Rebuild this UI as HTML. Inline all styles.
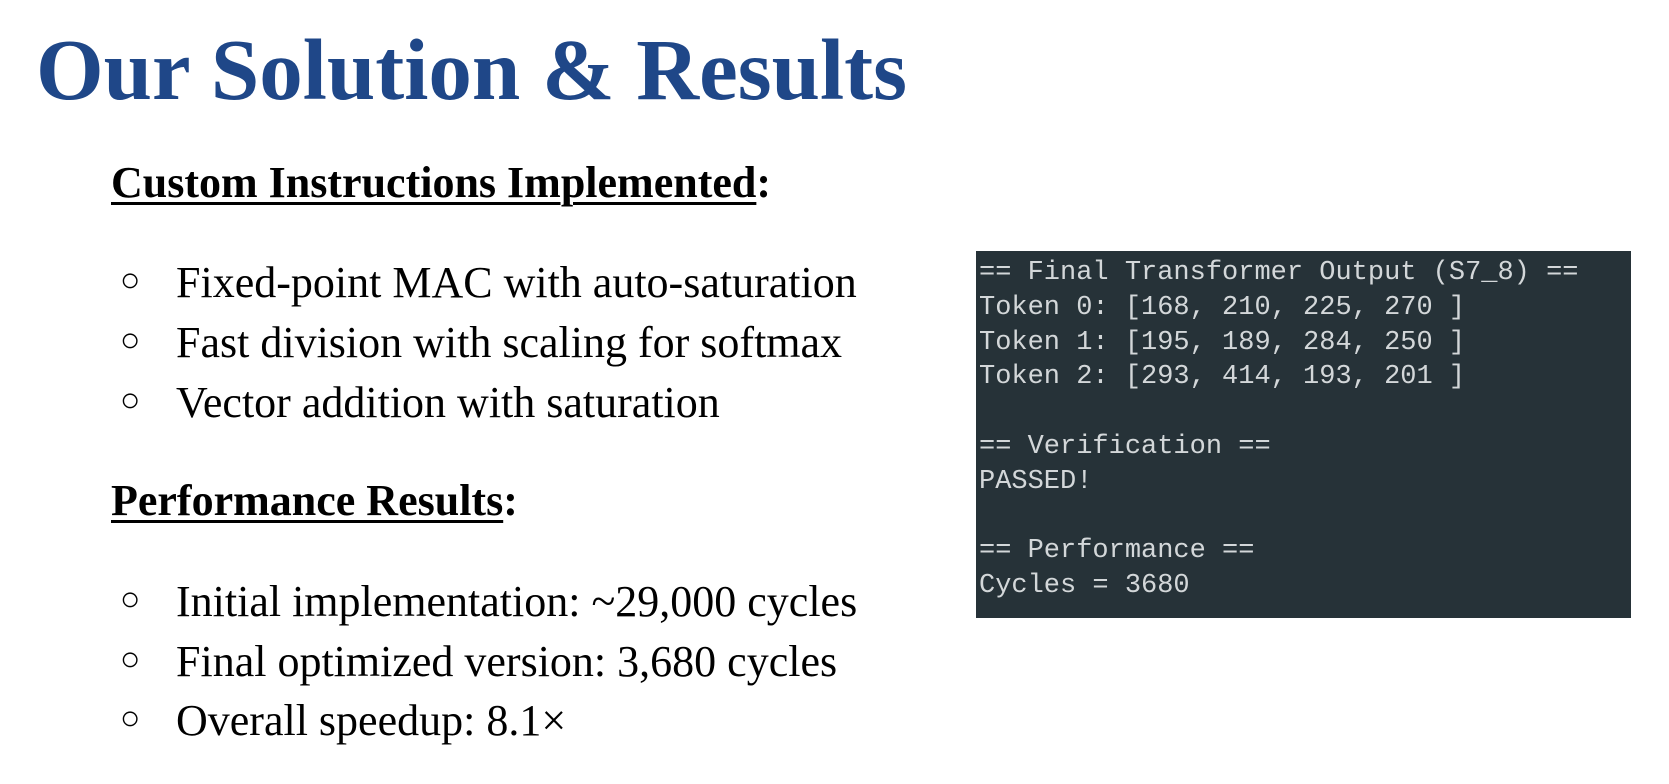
<!DOCTYPE html>
<html><head><style>
html,body{margin:0;padding:0;background:#fff;width:1669px;height:784px;overflow:hidden;position:relative}
.t{position:absolute;font-family:"Liberation Serif",serif;white-space:nowrap}
h1{position:absolute;left:36px;top:10px;margin:0;font:bold 87px "Liberation Serif",serif;color:#1f4788;white-space:nowrap;line-height:120px}
.h{font-weight:bold;font-size:44px;color:#000;left:111px}
.h span{text-decoration:underline;text-decoration-thickness:3px;text-underline-offset:5px}
.b{font-size:44px;color:#000;left:120px}
.b i{font-style:normal;position:absolute;left:0;font-size:34px;top:5px}
.b span{position:absolute;left:56px}
.term{position:absolute;left:976px;top:251px;width:655px;height:367px;background:#263238}
.term pre{margin:0;position:absolute;left:3px;top:5px;font:27px/34.8px "Liberation Mono",monospace;color:#d3d7d9}
</style></head><body>
<h1>Our Solution &amp; Results</h1>
<div class="t h" style="top:157px"><span>Custom Instructions Implemented</span>:</div>
<div class="t b" style="top:257px"><i>○</i><span>Fixed-point MAC with auto-saturation</span></div>
<div class="t b" style="top:317px"><i>○</i><span>Fast division with scaling for softmax</span></div>
<div class="t b" style="top:377px"><i>○</i><span>Vector addition with saturation</span></div>
<div class="t h" style="top:475px"><span>Performance Results</span>:</div>
<div class="t b" style="top:576px"><i>○</i><span>Initial implementation: ~29,000 cycles</span></div>
<div class="t b" style="top:636px"><i>○</i><span>Final optimized version: 3,680 cycles</span></div>
<div class="t b" style="top:695px"><i>○</i><span>Overall speedup: 8.1×</span></div>
<div class="term"><pre>== Final Transformer Output (S7_8) ==
Token 0: [168, 210, 225, 270 ]
Token 1: [195, 189, 284, 250 ]
Token 2: [293, 414, 193, 201 ]

== Verification ==
PASSED!

== Performance ==
Cycles = 3680</pre></div>
</body></html>
